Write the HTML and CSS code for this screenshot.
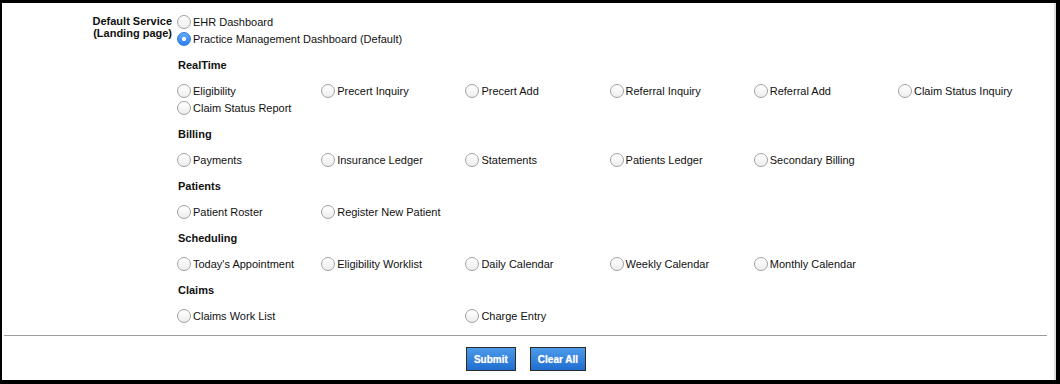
FILE: index.html
```html
<!DOCTYPE html>
<html lang="en">
<head>
    <meta charset="UTF-8">
    <meta name="viewport" content="width=device-width, initial-scale=1.0">
    <title>Default Service</title>
    <link rel="stylesheet" href="styles.css">
</head>
<body>
    <div class="frame">
        <form class="settings" id="landingForm">
            <div class="field">
                <div class="field-label">Default Service<br>(Landing page)</div>
                <div class="field-body">
                    <div class="landing">
                        <label class="option"><input type="radio" name="landing" value="ehr">EHR Dashboard</label>
                        <label class="option"><input type="radio" name="landing" value="pm" checked>Practice Management Dashboard (Default)</label>
                    </div>

                    <div class="section">
                        <h3>RealTime</h3>
                        <div class="options">
                            <label class="option"><input type="radio" name="landing" value="eligibility">Eligibility</label>
                            <label class="option"><input type="radio" name="landing" value="precert_inquiry">Precert Inquiry</label>
                            <label class="option"><input type="radio" name="landing" value="precert_add">Precert Add</label>
                            <label class="option"><input type="radio" name="landing" value="referral_inquiry">Referral Inquiry</label>
                            <label class="option"><input type="radio" name="landing" value="referral_add">Referral Add</label>
                            <label class="option"><input type="radio" name="landing" value="claim_status_inquiry">Claim Status Inquiry</label>
                            <label class="option"><input type="radio" name="landing" value="claim_status_report">Claim Status Report</label>
                        </div>
                    </div>

                    <div class="section">
                        <h3>Billing</h3>
                        <div class="options">
                            <label class="option"><input type="radio" name="landing" value="payments">Payments</label>
                            <label class="option"><input type="radio" name="landing" value="insurance_ledger">Insurance Ledger</label>
                            <label class="option"><input type="radio" name="landing" value="statements">Statements</label>
                            <label class="option"><input type="radio" name="landing" value="patients_ledger">Patients Ledger</label>
                            <label class="option"><input type="radio" name="landing" value="secondary_billing">Secondary Billing</label>
                        </div>
                    </div>

                    <div class="section">
                        <h3>Patients</h3>
                        <div class="options">
                            <label class="option"><input type="radio" name="landing" value="patient_roster">Patient Roster</label>
                            <label class="option"><input type="radio" name="landing" value="register_patient">Register New Patient</label>
                        </div>
                    </div>

                    <div class="section">
                        <h3>Scheduling</h3>
                        <div class="options">
                            <label class="option"><input type="radio" name="landing" value="todays_appointment">Today's Appointment</label>
                            <label class="option"><input type="radio" name="landing" value="eligibility_worklist">Eligibility Worklist</label>
                            <label class="option"><input type="radio" name="landing" value="daily_calendar">Daily Calendar</label>
                            <label class="option"><input type="radio" name="landing" value="weekly_calendar">Weekly Calendar</label>
                            <label class="option"><input type="radio" name="landing" value="monthly_calendar">Monthly Calendar</label>
                        </div>
                    </div>

                    <div class="section">
                        <h3>Claims</h3>
                        <div class="options">
                            <label class="option"><input type="radio" name="landing" value="claims_work_list">Claims Work List</label>
                            <span class="option-empty"></span>
                            <label class="option"><input type="radio" name="landing" value="charge_entry">Charge Entry</label>
                        </div>
                    </div>
                </div>
            </div>

            <hr class="divider">

            <div class="actions">
                <button type="submit" class="btn">Submit</button>
                <button type="reset" class="btn">Clear All</button>
            </div>
        </form>
    </div>
</body>
</html>
```

FILE: styles.css
```css
/* Page basics */
body {
    margin: 0;
    padding: 0;
    background-color: #fff;
    font-family: "Liberation Sans", Arial, Helvetica, sans-serif;
    font-size: 11px;
    color: #111;
}

/* Outer window frame */
.frame {
    box-sizing: border-box;
    width: 1060px;
    height: 384px;
    border-style: solid;
    border-color: #000;
    border-width: 3px 4px 4px 2px;
}

.settings {
    box-sizing: border-box;
    height: 100%;
    padding-top: 10px;
    border-right: 2px solid #dcdcdc;
}

/* Label column + options column */
.field {
    display: grid;
    grid-template-columns: 170px 1fr;
    column-gap: 4px;
}

.field-label {
    padding-top: 2px;
    text-align: right;
    font-weight: bold;
    line-height: 12px;
}

.landing {
    margin-bottom: 10px;
}

/* Section groups */
.section {
    margin-bottom: 10px;
}

.section h3 {
    margin: 0 0 9px 0;
    padding-left: 2px;
    font-size: 11px;
    line-height: 16px;
    font-weight: bold;
}

.options {
    display: grid;
    grid-template-columns: repeat(6, 144.2px);
}

/* Radio rows */
.option {
    display: flex;
    align-items: center;
    height: 17px;
    white-space: nowrap;
    cursor: pointer;
}

.option input[type="radio"] {
    appearance: none;
    -webkit-appearance: none;
    box-sizing: border-box;
    width: 14px;
    height: 14px;
    margin: 0 2px 0 1px;
    border: 1px solid #a2a2a2;
    border-radius: 50%;
    background: linear-gradient(#ffffff, #eeeeee);
    flex-shrink: 0;
}

.option input[type="radio"]:checked {
    border-color: #2f7be0;
    background:
        radial-gradient(circle, #fff 0 1.8px, transparent 2.4px),
        linear-gradient(#62acfb, #2a7fee);
}

/* Divider and buttons */
.divider {
    margin: 1px 7px 11px 2px;
    border: none;
    border-top: 1px solid #9c9c9c;
    height: 0;
}

.actions {
    display: flex;
    justify-content: center;
    gap: 14px;
    padding-right: 4px;
}

.btn {
    box-sizing: border-box;
    height: 24px;
    padding: 0 7px;
    border: 1px solid #2b2b2b;
    background: linear-gradient(#4d9bea, #1f6dcf);
    color: #fff;
    font-family: "Liberation Sans", Arial, Helvetica, sans-serif;
    font-size: 10px;
    font-weight: bold;
    text-shadow: 0 0 1px rgba(255, 255, 255, 0.6);
    cursor: pointer;
}

.btn:hover {
    background: linear-gradient(#5aa5f0, #2675d6);
}
```
